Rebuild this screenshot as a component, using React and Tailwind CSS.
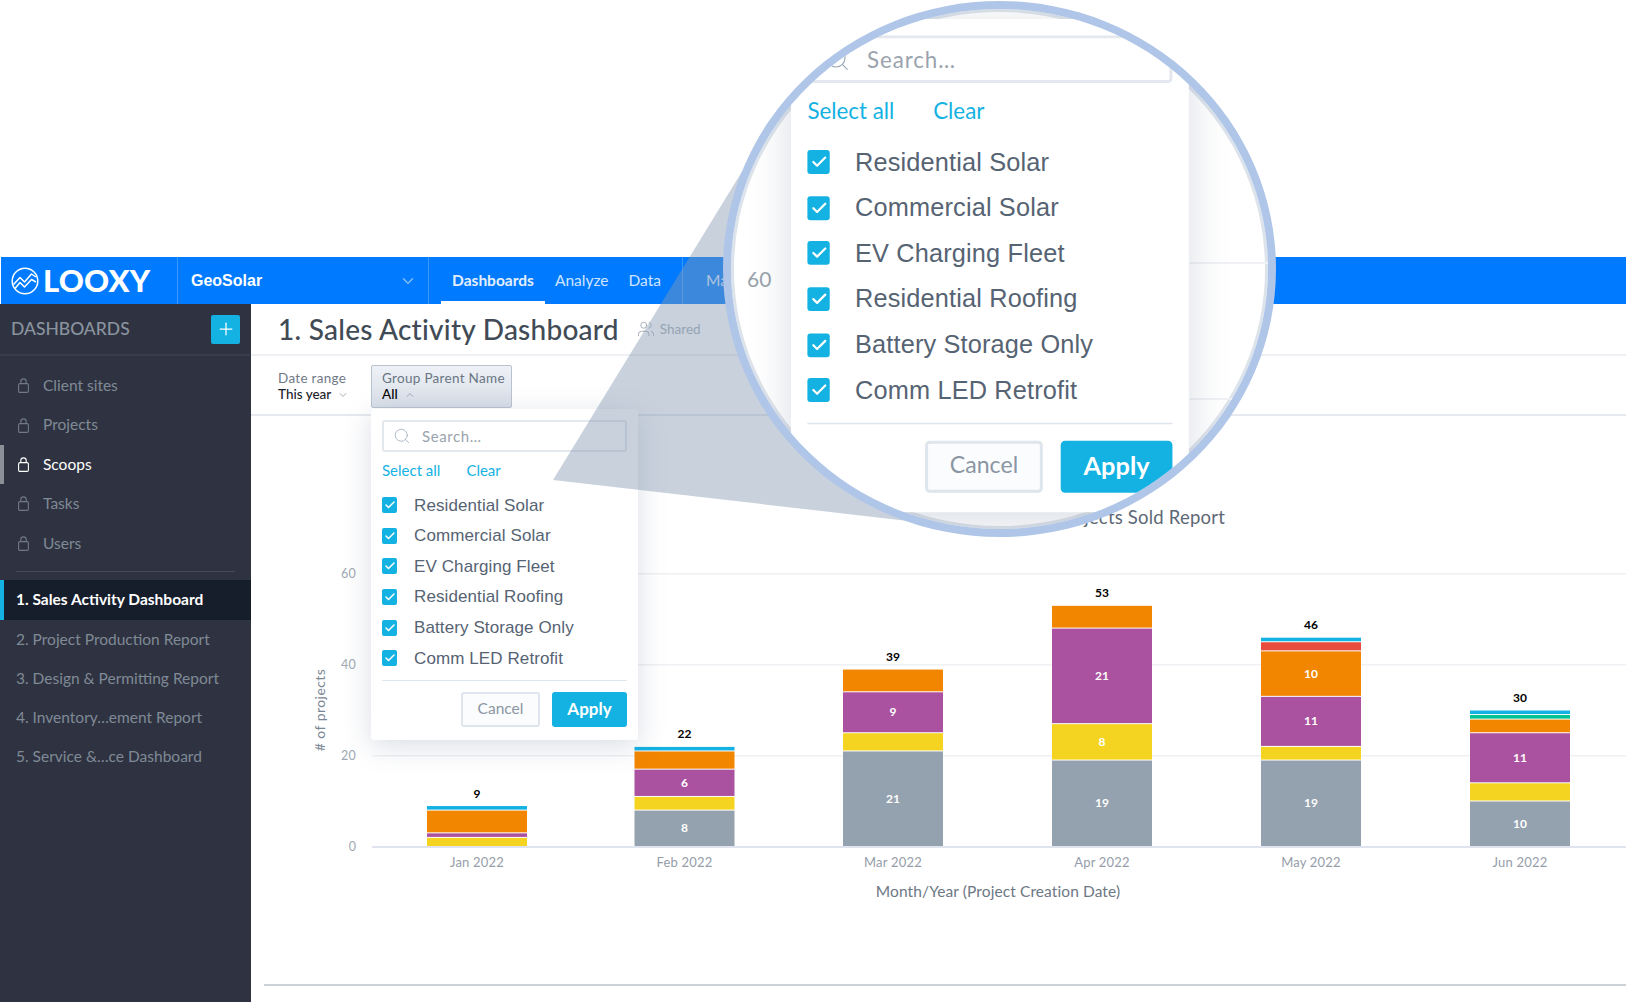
import React from "react";
import { Search, Users, ChevronDown, ChevronUp, Plus, Check } from "lucide-react";

const lato = "font-['Lato',sans-serif]";
const arial = "font-['Liberation_Sans',Arial,sans-serif]";

const Lock = ({ color = "#6f7a86" }) => (
  <svg width="11" height="15" viewBox="0 0 11 15" fill="none" stroke={color} strokeWidth="1.1">
    <rect x="0.6" y="5.6" width="9.8" height="8.8" rx="1.4" />
    <path d="M2.8 5.6V3.6a2.7 2.7 0 0 1 5.4 0v2" />
  </svg>
);

const LogoMark = () => (
  <svg width="28" height="28" viewBox="0 0 28 28" fill="none" stroke="#fff" strokeWidth="1.5" strokeLinejoin="round">
    <circle cx="14" cy="14" r="12.8" />
    <path d="M2.5 17.5 9 10.5l4.5 4.5 7-8 4.5 3" />
    <path d="M4 21.5 9 15.5l4.5 4.5 7-7.5 4.5 2.5" />
  </svg>
);

const ITEMS = ["Residential Solar", "Commercial Solar", "EV Charging Fleet", "Residential Roofing", "Battery Storage Only", "Comm LED Retrofit"];

const Popup = () => (
  <div className="w-[267px] h-[331px] bg-white rounded-[3px] px-[11px] pt-[11px] shadow-[0_6px_28px_rgba(80,100,130,0.22)]">
    <div className="h-[32px] flex items-center border-2 border-[#e3e8ef] rounded-[3px] pl-[9px] gap-[11px]">
      <Search size={18} strokeWidth={1} color="#9aa7b5" />
      <span className={`${lato} text-[15px] tracking-[0.6px] text-[#9aa3ad]`}>Search…</span>
    </div>
    <div className={`${lato} flex gap-[26px] mt-[9px] h-[18px] items-center text-[15px] text-[#14b2e2]`}>
      <span>Select all</span>
      <span>Clear</span>
    </div>
    <div className="mt-[11px] flex flex-col">
      {ITEMS.map((t) => (
        <div key={t} className="h-[30.6px] flex items-center gap-[17px]">
          <span className="w-[15px] h-[16px] rounded-[2px] bg-[#14b2e2] flex items-center justify-center">
            <Check size={12} strokeWidth={3} color="#fff" />
          </span>
          <span className={`${arial} text-[17px] tracking-[0.1px] text-[#566373]`}>{t}</span>
        </div>
      ))}
    </div>
    <div className="border-t border-[#dfe5ee] mt-[6px]" />
    <div className="flex justify-end gap-[12px] mt-[11px]">
      <div className={`${lato} w-[79px] h-[35px] flex items-center justify-center border-2 border-[#dfe5ec] rounded-[3px] bg-[#fbfcfd] text-[15.5px] text-[#8a96a3]`}>Cancel</div>
      <div className={`${lato} w-[75px] h-[35px] flex items-center justify-center rounded-[3px] bg-[#14b2e2] text-[17px] font-bold text-white`}>Apply</div>
    </div>
  </div>
);

const SEG = { gray: "#94a1ae", yellow: "#f4d420", purple: "#aa529f", orange: "#f28600", red: "#e74c3c", green: "#00c292", blue: "#14b2e2" };
const BARS = [
  { m: "Jan 2022", x: 427, total: 9, s: [["yellow", 2], ["purple", 1], ["orange", 5], ["blue", 1]] },
  { m: "Feb 2022", x: 634.5, total: 22, s: [["gray", 8], ["yellow", 3], ["purple", 6], ["orange", 4], ["blue", 1]] },
  { m: "Mar 2022", x: 843, total: 39, s: [["gray", 21], ["yellow", 4], ["purple", 9], ["orange", 5]] },
  { m: "Apr 2022", x: 1052, total: 53, s: [["gray", 19], ["yellow", 8], ["purple", 21], ["orange", 5]] },
  { m: "May 2022", x: 1261, total: 46, s: [["gray", 19], ["yellow", 3], ["purple", 11], ["orange", 10], ["red", 2], ["blue", 1]] },
  { m: "Jun 2022", x: 1470, total: 30, s: [["gray", 10], ["yellow", 4], ["purple", 11], ["orange", 3], ["green", 1], ["blue", 1]] },
];
const U = 4.55;
const BASE = 846.5;

const Chart = () => (
  <svg width="1375" height="586" viewBox="251 416 1375 586" className="block" fontFamily="Lato, sans-serif">
    {[[60, 573], [40, 664], [20, 755]].map(([v, y]) => (
      <g key={v}>
        <rect x="372" y={y} width="1254" height="1.5" fill="#eff1f4" />
        <text x="356" y={y + 5} textAnchor="end" fontSize="12.5" letterSpacing="0.3" fill="#a0a8b3">{v}</text>
      </g>
    ))}
    <text x="356" y="851" textAnchor="end" fontSize="12.5" fill="#a0a8b3">0</text>
    <text transform="translate(325 710) rotate(-90)" textAnchor="middle" fontSize="14" letterSpacing="0.45" fill="#7b8794"># of projects</text>
    <text x="1225" y="524" textAnchor="end" fontSize="18.5" letterSpacing="0.2" fill="#5d6875">Projects Sold Report</text>
    <rect x="372" y="846" width="1254" height="2" fill="#dfe4ee" />
    {BARS.map((b) => {
      let y = BASE;
      return (
        <g key={b.m}>
          {b.s.map(([c, n]) => {
            const h = n * U;
            y -= h;
            return (
              <g key={c}>
                <rect x={b.x} y={y + 0.5} width="100" height={h - 1} fill={SEG[c]} />
                {n >= 6 && (
                  <text x={b.x + 50} y={y + h / 2 + 4} textAnchor="middle" fontSize="12" fontWeight="700" fill="#fff">{n}</text>
                )}
              </g>
            );
          })}
          <text x={b.x + 50} y={y - 8} textAnchor="middle" fontSize="12" fontWeight="700" fill="#000">{b.total}</text>
          <text x={b.x + 50} y="867" textAnchor="middle" fontSize="13" letterSpacing="0.2" fill="#959daa">{b.m}</text>
        </g>
      );
    })}
    <text x="998" y="897" textAnchor="middle" fontSize="15.5" letterSpacing="0.1" fill="#6d7885">Month/Year (Project Creation Date)</text>
    <rect x="264" y="984" width="1362" height="2" fill="#cdd2d8" />
  </svg>
);

const Magnifier = () => (
  <div className="absolute left-[723px] top-[1px] w-[553px] h-[536px] rounded-[50%] bg-white overflow-hidden border-[8px] border-[#b0c6e8] shadow-[inset_0_0_0_3px_#dde3ea]">
    <div className={`absolute left-[16px] top-[254px] w-[22px] text-[21px] text-[#9aa3ad] ${lato}`}>60</div>
    <div className="absolute left-[459px] top-[253px] w-[80px] h-[2px] bg-[#eff1f4]" />
    <div className="absolute left-[459px] top-[389px] w-[80px] h-[2px] bg-[#eff1f4]" />
    <div className="absolute left-[60px] top-[10px] origin-top-left scale-[1.49]">
      <Popup />
    </div>
  </div>
);

const SideItem = ({ label, active }) => (
  <div className="relative h-[39.4px] flex items-center gap-[14px] pl-[18px]">
    {active && <span className="absolute left-0 top-0 bottom-0 w-[4px] bg-[#8b8f97]" />}
    <Lock color={active ? "#ffffff" : "#6f7a86"} />
    <span className={`${lato} text-[15.5px] ${active ? "text-white" : "text-[#7f8a96]"}`}>{label}</span>
  </div>
);

export default function App() {
  return (
    <div className="relative w-[1626px] h-[1002px] overflow-hidden bg-white">
      <div className="h-[257px]" />
      <header className="h-[47px] ml-px flex bg-[#007bff] text-white">
        <div className="w-[177px] flex items-center gap-[4px] pl-[10px] border-r border-[#3a98ff]">
          <LogoMark />
          <span className={`${lato} text-[31px] font-black leading-none tracking-[0.2px]`}>LOOXY</span>
        </div>
        <div className="w-[251px] flex items-center justify-between pl-[13px] pr-[11px] border-r border-[#3a98ff]">
          <span className={`${arial} text-[16px] font-bold`}>GeoSolar</span>
          <ChevronDown size={18} strokeWidth={2} color="#7fbcff" />
        </div>
        <nav className={`${lato} flex pl-[12px] text-[15.5px] text-[#cfe4ff]`}>
          <div className="relative w-[104px] flex items-center justify-center font-bold text-[#e3eefc]">
            Dashboards
            <span className="absolute left-0 right-0 bottom-0 h-[3px] bg-white" />
          </div>
          <div className="flex items-center ml-[10px]">Analyze</div>
          <div className="flex items-center ml-[20px]">Data</div>
          <div className="flex items-center ml-[21px] pl-[23px] border-l border-[#3a98ff]">Manage</div>
        </nav>
      </header>
      <div className="flex h-[698px]">
        <aside className="w-[251px] shrink-0 bg-[#2f3341]">
          <div className="h-[52px] flex items-center justify-between pl-[11px] pr-[11px] border-b-2 border-[#383d4b]">
            <span className={`${lato} text-[17.5px] font-medium text-[#8a949f]`}>DASHBOARDS</span>
            <span className="w-[29px] h-[29px] rounded-[2px] bg-[#14b2e2] flex items-center justify-center">
              <Plus size={20} strokeWidth={1.5} color="#fff" />
            </span>
          </div>
          <div className="pt-[10px]">
            <SideItem label="Client sites" />
            <SideItem label="Projects" />
            <SideItem label="Scoops" active />
            <SideItem label="Tasks" />
            <SideItem label="Users" />
          </div>
          <div className="mx-[16px] mt-[8px] border-t border-[#464b58]" />
          <div className="mt-[8px]">
            <div className={`${lato} h-[40px] flex items-center pl-[12px] border-l-4 border-[#14b2e2] bg-[#161d2b] text-[15.5px] font-bold text-white`}>1. Sales Activity Dashboard</div>
            {["2. Project Production Report", "3. Design & Permitting Report", "4. Inventory…ement Report", "5. Service &…ce Dashboard"].map((t) => (
              <div key={t} className={`${lato} h-[39.2px] flex items-center pl-[16px] text-[15.5px] text-[#7f8a96]`}>{t}</div>
            ))}
          </div>
        </aside>
        <main className="flex-1 min-w-0">
          <div className="h-[52px] flex items-center pl-[27px] border-b-2 border-[#eef0f4]">
            <h1 className={`${lato} text-[28px] font-medium tracking-[0.25px] text-[#414b56]`}>1. Sales Activity Dashboard</h1>
            <Users size={18} strokeWidth={1} color="#8c98a5" className="ml-[18px]" />
            <span className={`${lato} ml-[5px] text-[13.5px] text-[#a3adb8]`}>Shared</span>
          </div>
          <div className="h-[60px] flex items-start pl-[27px] pt-[9px] border-b-2 border-[#e6eaef]">
            <div className="w-[93px] pt-[5px]">
              <div className={`${lato} text-[13.5px] leading-[17px] tracking-[0.3px] text-[#6f7a86]`}>Date range</div>
              <div className={`${lato} flex items-center gap-[6px] text-[13.5px] leading-[15px] font-medium text-[#1c222a]`}>This year <ChevronDown size={12} strokeWidth={1.5} color="#8a96a3" /></div>
            </div>
            <div className="relative">
              <div className="w-[141px] h-[43px] pl-[10px] pt-[4px] rounded-[2px] border border-[#b9c3cf] bg-gradient-to-b from-[#eef1f6] to-[#d8dee8]">
                <div className={`${lato} text-[13.5px] leading-[17px] tracking-[0.3px] text-[#6a7582]`}>Group Parent Name</div>
                <div className={`${lato} flex items-center gap-[6px] text-[13.5px] leading-[15px] font-medium text-black`}>All <ChevronUp size={12} strokeWidth={1.5} color="#8a96a3" /></div>
              </div>
              <div className="absolute left-0 top-[44px] z-10">
                <Popup />
              </div>
            </div>
          </div>
          <Chart />
        </main>
      </div>
      <svg className="absolute left-0 top-0 pointer-events-none z-20" width="1626" height="1002">
        <polygon points="553,480 746,165 1000,269 960,527" fill="rgba(134,154,177,0.45)" />
      </svg>
      <div className="z-30 absolute inset-0 pointer-events-none">
        <Magnifier />
      </div>
    </div>
  );
}
